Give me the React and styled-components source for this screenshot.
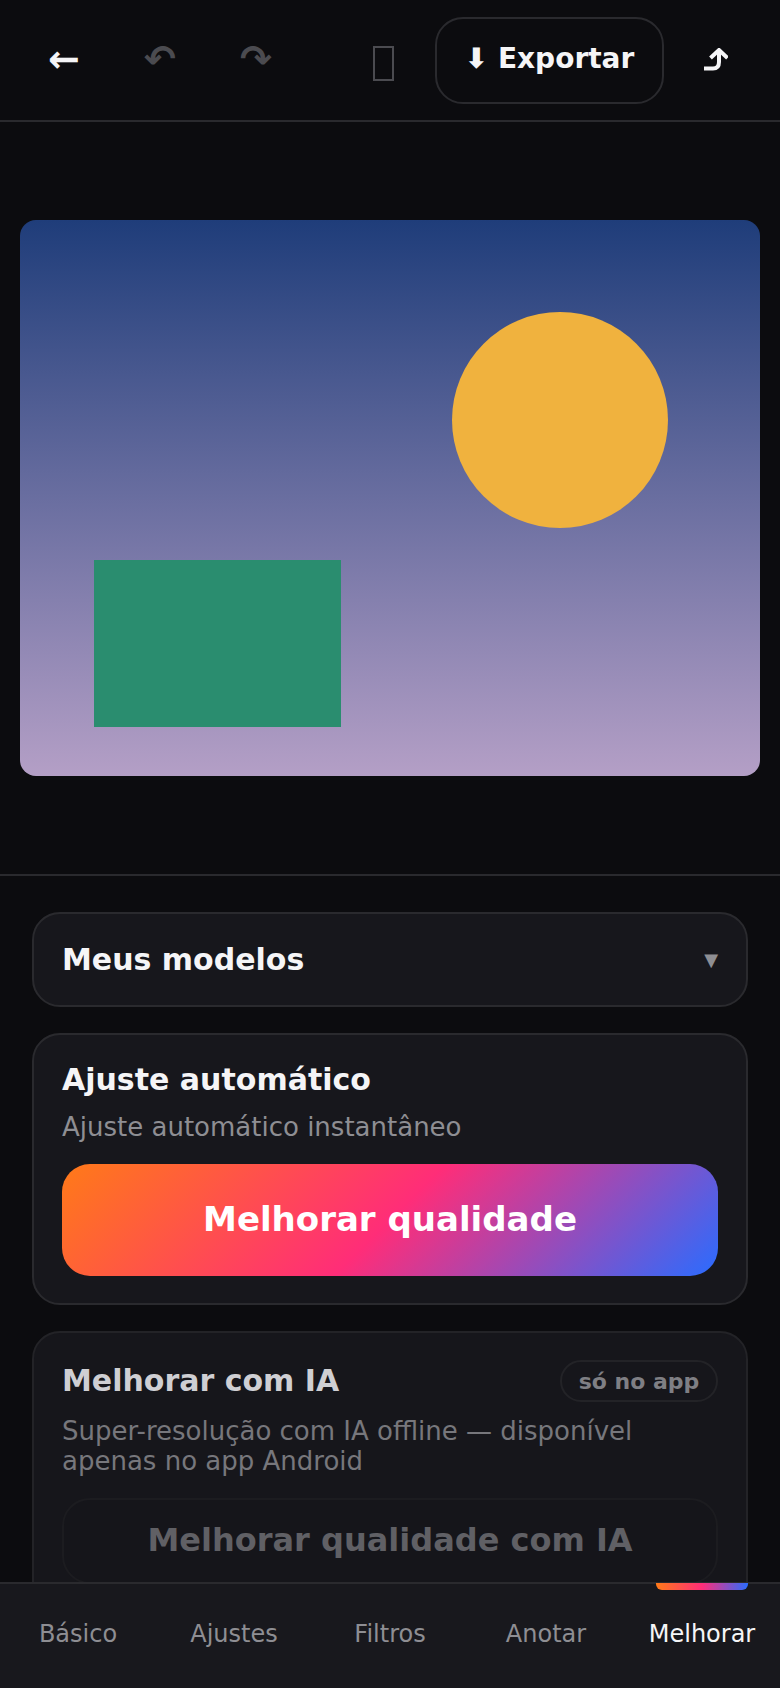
import React from 'react'
import styled, { createGlobalStyle } from 'styled-components'

const GlobalStyle = createGlobalStyle`
  html, body {
    margin: 0;
    padding: 0;
    background: #0c0c0f;
  }
  * {
    box-sizing: border-box;
  }
`

const Screen = styled.div`
  width: 780px;
  height: 1688px;
  display: flex;
  flex-direction: column;
  overflow: hidden;
  background: #0c0c0f;
  color: #f5f5f7;
  font-family: "DejaVu Sans", sans-serif;
`

const Header = styled.header`
  height: 122px;
  flex: none;
  display: flex;
  align-items: center;
  justify-content: space-between;
  padding: 0 16px;
  border-bottom: 2px solid #2a2a2e;
`

const ToolGroup = styled.div`
  display: flex;
  align-items: center;
  gap: ${(p) => p.$gap || 0}px;
`

const IconButton = styled.button`
  width: 96px;
  height: 88px;
  padding: 0 0 2px;
  display: flex;
  align-items: center;
  justify-content: center;
  border: none;
  background: none;
  font-family: inherit;
  font-size: 38px;
  font-weight: 700;
  line-height: 1;
  color: ${(p) => (p.$dim ? '#4b4b50' : '#f5f5f7')};
`

const MissingGlyph = styled.span`
  display: block;
  width: 21px;
  height: 35px;
  margin-top: 8px;
  border: 2px solid #4b4b50;
`

const ExportButton = styled.button`
  width: 229px;
  height: 87px;
  padding: 0 0 4px;
  border: 2px solid #2a2a2e;
  border-radius: 28px;
  background: none;
  color: #f5f5f7;
  font-family: inherit;
  font-size: 28px;
  font-weight: 700;
`

const Stage = styled.main`
  height: 754px;
  flex: none;
  display: flex;
  align-items: center;
  justify-content: center;
  padding: 0 20px;
  border-bottom: 2px solid #2a2a2e;
`

const Canvas = styled.div`
  position: relative;
  width: 740px;
  height: 556px;
  border-radius: 16px;
  overflow: hidden;
  background: linear-gradient(180deg, #1f3d7a 0%, #b49fc6 100%);
`

const Sun = styled.div`
  position: absolute;
  left: 432px;
  top: 92px;
  width: 216px;
  height: 216px;
  border-radius: 50%;
  background: #f0b23e;
`

const Field = styled.div`
  position: absolute;
  left: 74px;
  top: 340px;
  width: 247px;
  height: 167px;
  background: #2a8d6f;
`

const Panel = styled.section`
  flex: 1;
  min-height: 0;
  display: flex;
  flex-direction: column;
  gap: 26px;
  padding: 36px 32px 0;
  overflow: hidden;
`

const Card = styled.div`
  flex: none;
  padding: 27px 28px;
  border: 2px solid ${(p) => (p.$off ? '#232327' : '#2a2a2e')};
  border-radius: 28px;
  background: ${(p) => (p.$off ? '#16161b' : '#17171c')};
`

const Dropdown = styled(Card)`
  height: 95px;
  display: flex;
  align-items: center;
  justify-content: space-between;
  padding: 0 28px;
`

const Caret = styled.span`
  font-size: 18px;
  color: #8e8e93;
`

const TitleRow = styled.div`
  display: flex;
  align-items: center;
  justify-content: space-between;
`

const Title = styled.h2`
  margin: 0;
  font-size: 30px;
  line-height: 36px;
  font-weight: 700;
  color: ${(p) => (p.$muted ? '#cfcfd3' : '#f5f5f7')};
`

const Desc = styled.p`
  margin: 14px 0 22px;
  font-size: 26px;
  line-height: 30px;
  color: ${(p) => (p.$muted ? '#77777c' : '#8e8e93')};
`

const Badge = styled.span`
  width: 158px;
  height: 42px;
  display: flex;
  align-items: center;
  justify-content: center;
  border: 2px solid #232327;
  border-radius: 21px;
  font-size: 22px;
  font-weight: 700;
  color: #7f7f84;
`

const ActionButton = styled.button`
  display: block;
  width: 100%;
  height: 112px;
  padding: 0 0 2px;
  border: none;
  border-radius: 28px;
  background: linear-gradient(135deg, #ff7a18 0%, #ff2d78 50%, #2a6cff 100%);
  color: #fff;
  font-family: inherit;
  font-size: 34px;
  font-weight: 700;
`

const GhostButton = styled(ActionButton)`
  height: 86px;
  border: 2px solid #1c1c20;
  background: #15151a;
  color: #606065;
  font-size: 32px;
`

const TabBar = styled.nav`
  position: relative;
  height: 106px;
  flex: none;
  display: grid;
  grid-template-columns: repeat(5, 1fr);
  padding-bottom: 4px;
  border-top: 2px solid #2a2a2e;
  background: #18181d;
`

const Tab = styled.div`
  position: relative;
  display: flex;
  align-items: center;
  justify-content: center;
  font-size: 24px;
  color: ${(p) => (p.$active ? '#f5f5f7' : '#8e8e93')};
`

const TabMark = styled.span`
  position: absolute;
  top: -1px;
  left: 32px;
  width: 92px;
  height: 7px;
  border-radius: 0 0 6px 6px;
  background: linear-gradient(90deg, #ff7a18, #ff2d78, #2a6cff);
`

const tabs = ['Básico', 'Ajustes', 'Filtros', 'Anotar', 'Melhorar']

const ShareIcon = () => (
  <svg width="24" height="23" viewBox="0 0 24 23" fill="none" stroke="#f5f5f7" strokeWidth="4">
    <path d="M0 20.5 H9 Q15 20.5 15 14 V3" />
    <path d="M6.5 10 L15 2 L23.5 10" />
  </svg>
)

export default function App() {
  return (
    <Screen>
      <GlobalStyle />
      <Header>
        <ToolGroup>
          <IconButton>←</IconButton>
          <IconButton $dim>↶</IconButton>
          <IconButton $dim>↷</IconButton>
        </ToolGroup>
        <ToolGroup $gap={4}>
          <IconButton $dim>
            <MissingGlyph />
          </IconButton>
          <ExportButton>⬇ Exportar</ExportButton>
          <IconButton>
            <ShareIcon />
          </IconButton>
        </ToolGroup>
      </Header>
      <Stage>
        <Canvas>
          <Sun />
          <Field />
        </Canvas>
      </Stage>
      <Panel>
        <Dropdown>
          <Title>Meus modelos</Title>
          <Caret>▼</Caret>
        </Dropdown>
        <Card>
          <Title>Ajuste automático</Title>
          <Desc>Ajuste automático instantâneo</Desc>
          <ActionButton>Melhorar qualidade</ActionButton>
        </Card>
        <Card $off>
          <TitleRow>
            <Title $muted>Melhorar com IA</Title>
            <Badge>só no app</Badge>
          </TitleRow>
          <Desc $muted>
            Super-resolução com IA offline — disponível
            <br />
            apenas no app Android
          </Desc>
          <GhostButton>Melhorar qualidade com IA</GhostButton>
        </Card>
      </Panel>
      <TabBar>
        {tabs.map((name) => (
          <Tab key={name} $active={name === 'Melhorar'}>
            {name}
            {name === 'Melhorar' && <TabMark />}
          </Tab>
        ))}
      </TabBar>
    </Screen>
  )
}
